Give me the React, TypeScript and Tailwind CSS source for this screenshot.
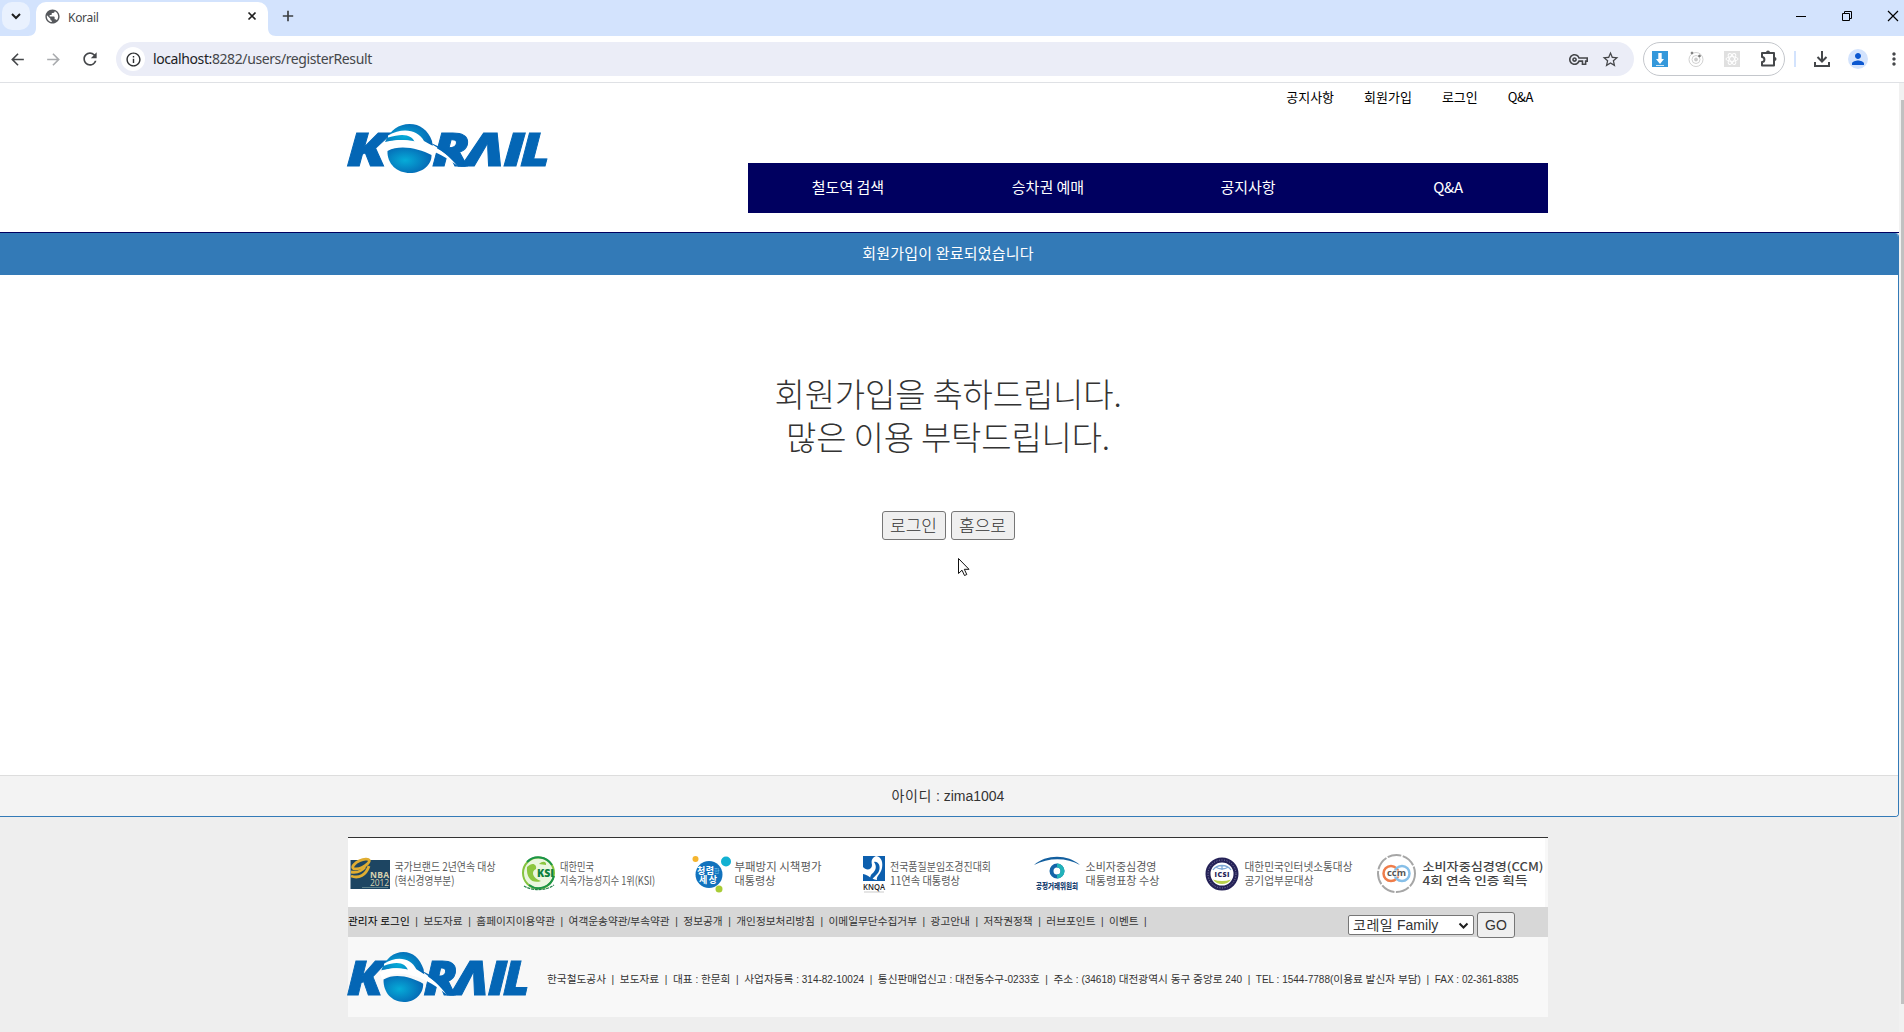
import React from "react";
import {
  MdArrowBack,
  MdArrowForward,
  MdInfoOutline,
  MdMoreVert,
  MdOutlineExtension,
  MdOutlineFileDownload,
  MdOutlineVpnKey,
  MdPerson,
  MdPublic,
  MdRefresh,
  MdStarBorder,
} from "react-icons/md";

const hangul = /([\uAC00-\uD7A3]+)/;

/** Text whose Hangul runs take a class of their own. */
function Mixed({ text, ko }: { text: string; ko: string }) {
  return (
    <>
      {text.split(hangul).map((part, i) =>
        hangul.test(part) ? (
          <span key={i} className={ko}>
            {part}
          </span>
        ) : (
          part
        ),
      )}
    </>
  );
}

function KorailLogo({ className, id }: { className: string; id: string }) {
  const letter = {
    fontFamily: '"Open Sans"',
    fontWeight: 800,
    fontStyle: "italic",
    fontSize: 46.5,
    fill: "#0466b5",
    stroke: "#0466b5",
    strokeWidth: 0.8,
    lengthAdjust: "spacingAndGlyphs",
  } as const;
  return (
    <svg className={className} viewBox="0 0 200 49" preserveAspectRatio="none" overflow="visible">
      <defs>
        <radialGradient id={id} cx="0.4" cy="0.5" r="0.6">
          <stop offset="0" stopColor="#06acd8" />
          <stop offset="1" stopColor="#0567b4" />
        </radialGradient>
      </defs>
      <text x="-1.500" y="42.400" textLength="41" {...letter}>K</text>
      <text x="84" y="42.400" textLength="38" {...letter}>R</text>
      <text x="117" y="42.400" textLength="39" {...letter}>Λ</text>
      <text x="155" y="42.400" textLength="22" {...letter}>I</text>
      <text x="172" y="42.400" textLength="30" {...letter}>L</text>
      <path d="M37 18 C42 6 51 0 61.500 0 C72 0 80 6 84 17 L85 25 C74 18 60 13 37 18Z" fill={`url(#${id})`} />
      <path d="M39.500 27 C53 20 71 25 83.500 31 C84 41 74 49 62 49 C49 49 39 40 39.500 27Z" fill={`url(#${id})`} />
      <path d="M40 11.500 C55 3 70 6 76 17 C86 23 101 29 111 42.700 C100 35 87 26 71 23 C58 20 48 21 38 27 L35 20 C46 15 59 15 67 18.500 C64 11 56 8.500 40 13.500Z" fill="#fff" />
      <path d="M80 18 C96 24 107 31 118 42.700 L110 42.700 C103 34 93 25 80 18Z" fill="#0466b5" />
    </svg>
  );
}

function BrowserChrome() {
  return (
    <header className="h-[83px] shrink-0 border-b border-[#dfe1e5] bg-white font-['Noto_Sans',sans-serif] text-[#45474a]">
      <div className="flex h-9 bg-[#d3e3fd]">
        <div className="mt-0.5 ml-0.5 flex size-7 items-center justify-center rounded-[10px] bg-[#e9f1fe]">
          <svg className="size-3" viewBox="0 0 12 12" fill="none" stroke="#1f1f1f" strokeWidth="2">
            <path d="M2 4l4 4 4-4" />
          </svg>
        </div>
        <svg className="mt-auto ml-[-2px] size-2" viewBox="0 0 8 8">
          <path d="M8 0v8H0c5 0 8-3 8-8z" fill="#fff" />
        </svg>
        <div className="mt-0.5 flex w-[232px] items-center rounded-t-[10px] bg-white pr-[9px] pb-1.5 pl-2">
          <MdPublic className="size-[17px] text-[#55585c]" />
          <span className="ml-[7px] flex-1 pt-1 text-xs leading-4 tracking-[-0.3px]">Korail</span>
          <svg className="size-3.5" viewBox="0 0 14 14" stroke="#1f1f1f" strokeWidth="1.700">
            <path d="M3.500 3.500l7 7M10.500 3.500l-7 7" />
          </svg>
        </div>
        <svg className="mt-auto size-2" viewBox="0 0 8 8">
          <path d="M0 0v8h8c-5 0-8-3-8-8z" fill="#fff" />
        </svg>
        <svg className="mt-2.5 ml-1.5 size-3" viewBox="0 0 12 12" stroke="#3c4043" strokeWidth="1.700">
          <path d="M6 .800v10.400M.800 6h10.400" />
        </svg>
        <svg className="mt-2.5 ml-auto size-3" viewBox="0 0 12 12" stroke="#000">
          <path d="M1 6.500h10" />
        </svg>
        <svg className="mt-2.5 ml-[34px] size-3" viewBox="0 0 12 12" fill="none" stroke="#000">
          <path d="M1.500 3.500h7v7h-7zM3.500 3.500v-2h7v7h-2" />
        </svg>
        <svg className="mt-2.5 mr-[5px] ml-[34px] size-3" viewBox="0 0 12 12" stroke="#000" strokeWidth="1.200">
          <path d="M1 1l10 10M11 1L1 11" />
        </svg>
      </div>
      <div className="flex h-[46px] items-center">
        <MdArrowBack className="ml-2 size-[19px]" />
        <MdArrowForward className="ml-[17px] size-[19px] text-[#a9abae]" />
        <MdRefresh className="ml-[17px] size-5" />
        <div className="ml-4 flex h-[34px] w-[1518px] items-center rounded-full bg-[#ebedf7] pl-[5px]">
          <span className="flex size-6 items-center justify-center rounded-full bg-white">
            <MdInfoOutline className="size-[17px] text-[#2d2f31]" />
          </span>
          <span className="ml-2 flex-1 text-sm leading-5 tracking-[-0.4px]">
            <span className="text-[#202124]">localhost:</span>8282/users/registerResult
          </span>
          <MdOutlineVpnKey className="size-[19px]" />
          <MdStarBorder className="mr-3.5 ml-[13px] size-[19px]" />
        </div>
        <div className="ml-[9px] flex h-[34px] w-[142px] items-center rounded-full border border-[#c4c7cc] pl-2">
          <svg className="size-4" viewBox="0 0 16 16">
            <path fill="#3498db" d="M0 0h16v16H0z" />
            <path fill="#fff" d="M6.300 2h3.400v6H12l-4 5-4-5h2.300zM4 14h8v.800H4z" />
          </svg>
          <svg className="ml-5 size-4" viewBox="0 0 16 16" fill="none" stroke="#c4c4c4" strokeWidth=".8">
            <circle cx="8" cy="8.500" r="7" />
            <circle cx="8" cy="8.500" r="4" />
            <circle cx="8" cy="8.500" r="1.500" fill="#ccc" />
            <circle cx="4" cy="2" r="1" fill="#777" stroke="#777" />
            <circle cx="11.500" cy="5" r="1" fill="#777" stroke="#777" />
          </svg>
          <svg className="ml-5 size-4" viewBox="0 0 16 16" fill="none" stroke="#fff">
            <path fill="#e0e0e0" stroke="none" d="M0 0h16v16H0z" />
            <ellipse cx="8" cy="8" rx="6" ry="2.400" />
            <ellipse cx="8" cy="8" rx="6" ry="2.400" transform="rotate(60 8 8)" />
            <ellipse cx="8" cy="8" rx="6" ry="2.400" transform="rotate(120 8 8)" />
          </svg>
          <svg className="ml-5 size-[18px]" viewBox="0 0 18 18" fill="none" stroke="#45474a" strokeWidth="2">
            <path d="M2 3h12v12.500H2v-3.500c3.200 0 3.200-5 0-5z" strokeLinejoin="round" />
            <path d="M6 2.500a2 2 0 0 1 4 0zM14.500 7a2 2 0 0 1 0 4z" fill="#45474a" stroke="none" />
          </svg>
        </div>
        <div className="ml-[9px] h-4 w-0.5 bg-[#d3e3fd]" />
        <svg className="ml-[17px] size-[18px]" viewBox="0 0 18 18" fill="none" stroke="#45474a" strokeWidth="2">
          <path d="M9 1v10M4.500 7L9 11.500 13.500 7M2 12v4h14v-4" />
        </svg>
        <span className="ml-[17px] flex size-5 items-center justify-center rounded-full bg-[#d3e3fd]">
          <MdPerson className="size-[18px] text-[#0b57d0]" />
        </span>
        <MdMoreVert className="ml-4 size-5 shrink-0" />
      </div>
    </header>
  );
}

function SiteHeader() {
  return (
    <div className="h-[150px] shrink-0 border-b border-[#000060] bg-white pr-[3px]">
      <div className="mx-auto flex w-[1200px] justify-between">
        <KorailLogo id="headerGlobe" className="mt-[41px] h-[49px] w-[200px]" />
        <div className="w-[800px]">
          <ul className="flex h-20 justify-end gap-[30px] pt-1 pr-[15px] text-[13px] leading-5 text-black">
            <li>공지사항</li>
            <li>회원가입</li>
            <li>로그인</li>
            <li className="tracking-[-0.4px]">Q&amp;A</li>
          </ul>
          <nav className="grid h-[50px] grid-cols-4 items-center bg-[#000060] pb-0.5 text-center text-[15px] text-white">
            <a>철도역 검색</a>
            <a>승차권 예매</a>
            <a>공지사항</a>
            <a className="tracking-[-0.4px]">Q&amp;A</a>
          </nav>
        </div>
      </div>
    </div>
  );
}

function ResultPanel() {
  return (
    <section className="flex h-[584px] shrink-0 flex-col overflow-hidden rounded-r-[4px] border-r border-b border-[#337ab7] bg-white text-center text-[#333]">
      <h3 className="h-[42px] bg-[#337ab7] pr-0.5 text-[15px] leading-[39px] tracking-[0.2px] text-white">
        회원가입이 완료되었습니다
      </h3>
      <div className="flex-1 pt-[97px] pr-0.5">
        <p className="text-[33px] leading-[43px] font-light tracking-[-0.2px]">
          회원가입을 축하드립니다.
          <br />
          많은 이용 부탁드립니다.
        </p>
        <div className="mt-[53px] flex justify-center gap-[5px] text-[17px] font-light">
          <button className="h-[29px] w-16 rounded-[3px] border border-[#767676] bg-[#efefef] pb-0.5 leading-[23px]">로그인</button>
          <button className="h-[29px] w-16 rounded-[3px] border border-[#767676] bg-[#efefef] pb-0.5 leading-[23px]">홈으로</button>
        </div>
      </div>
      <div className="h-[41px] border-t border-[#ddd] bg-[#f3f3f3] pr-0.5 font-['Liberation_Sans','Noto_Sans_CJK_KR',sans-serif] text-sm leading-[41px]">
        <Mixed text="아이디 : zima1004" ko="tracking-[0.6px]" />
      </div>
    </section>
  );
}

type BadgeProps = {
  x: number;
  lines: [string, string];
  widths: [number, number];
  bold?: boolean;
  children: React.ReactNode;
};

function Badge({ x, lines, widths, bold, children }: BadgeProps) {
  return (
    <svg className="h-[69px] w-[171px]" viewBox="0 0 171 69" fontFamily='"Noto Sans CJK KR"'>
      {children}
      {lines.map((line, i) => (
        <text
          key={line}
          x={x}
          y={33 + i * 13.5}
          fontSize="11.500"
          fontWeight={bold ? 500 : 400}
          fill={bold ? "#444" : "#5a5a5a"}
          textLength={widths[i]}
          lengthAdjust="spacingAndGlyphs"
        >
          {line}
        </text>
      ))}
    </svg>
  );
}

function Badges() {
  return (
    <div className="grid h-[69px] w-[1197px] grid-cols-7 bg-white">
      <Badge x={46.500} lines={["국가브랜드 2년연속 대상", "(혁신경영부분)"]} widths={[101, 60]}>
        <path fill="#1d4562" d="M2.500 22h39.500v29H2.500z" />
        <g fill="none" stroke="#e0ad32" strokeWidth="2.800">
          <ellipse cx="13" cy="26" rx="9" ry="3.500" transform="rotate(-25 13 26)" />
          <path d="M3 38c8 3 15-1 18-10M3 34c7 1 11-1 14-5" />
        </g>
        <text x="22" y="39.500" fontSize="8.500" fontWeight="700" fontFamily="Open Sans" fill="#d8d2b0" textLength="19">NBA</text>
        <text x="22" y="47.500" fontSize="8.500" fontFamily="Open Sans" fill="#d8d2b0" textLength="19">2012</text>
        <path stroke="#8aa" strokeWidth=".6" d="M14 49.500h26" />
      </Badge>
      <Badge x={41} lines={["대한민국", "지속가능성지수 1위(KSI)"]} widths={[34, 95]}>
        <circle cx="19.500" cy="35" r="15.500" fill="#eaf6df" stroke="#86c440" strokeWidth="2" />
        <path d="M8 24a16 16 0 0 1 25 3M35 38a16 16 0 0 1-25 9" fill="none" stroke="#1b9448" strokeWidth="2" />
        <path d="M8 29c6-6 10-2 9 2-5 2-4 9 5 12-8 3-15-2-14-14zM20 26c4-4 8-2 7 1z" fill="#8cc63f" />
        <text x="18" y="38.500" fontSize="10" fontWeight="800" fontFamily="Open Sans" fill="#0c8040" textLength="17" lengthAdjust="spacingAndGlyphs">KSI</text>
        <path d="M5 48c8 5 22 5 30-1" fill="none" stroke="#238048" strokeDasharray="3 .8" strokeWidth="1.200" />
      </Badge>
      <Badge x={44.500} lines={["부패방지 시책평가", "대통령상"]} widths={[87, 41]}>
        <circle cx="19" cy="36.500" r="13.500" fill="#1272bd" />
        <circle cx="5.500" cy="21" r="3" fill="#f5b52e" />
        <circle cx="36" cy="23.500" r="5" fill="#12b1d2" />
        <circle cx="29" cy="51" r="3.500" fill="#a9cc36" />
        <text x="7" y="35.500" fontSize="9" fontWeight="700" fill="#fff" textLength="17">청렴</text>
        <text x="24" y="34.500" fontSize="6" fill="#7cc8ec">한</text>
        <text x="9" y="45" fontSize="9" fontWeight="700" fill="#fff" textLength="18">세상</text>
      </Badge>
      <Badge x={29} lines={["전국품질분임조경진대회", "11연속 대통령상"]} widths={[101, 70]}>
        <path fill="#0d5fae" d="M2 18h22v25H2z" />
        <path d="M2 29c3 4 9 3 9-2-1-5 0-7 4-9 6 1 7 7 6 12-1 6-6 8-5 12-7-1-8-5-14-6z" fill="#fff" />
        <path d="M13 24c4-1 7 4 5 9s-7 6-7 10c-3-2-2-6 1-8 3-3 4-7 1-11z" fill="#0d5fae" />
        <text x="2" y="51.500" fontSize="8.500" fontWeight="600" fontFamily="Open Sans" fill="#222" textLength="22" lengthAdjust="spacingAndGlyphs">KNQA</text>
        <path stroke="#aaa" strokeWidth=".6" d="M3 54h20" />
      </Badge>
      <Badge x={53.500} lines={["소비자중심경영", "대통령표창 수상"]} widths={[71, 74]}>
        <path d="M2 27C14 16 36 16 48 27 35 19.500 17 19 2 27z" fill="#135f9f" />
        <circle cx="25" cy="33" r="5.500" fill="none" stroke="#1565a9" strokeWidth="4" />
        <path d="M25 27.500a5.500 5.500 0 0 1 0 11" fill="none" stroke="#22b3b9" strokeWidth="4" />
        <text x="4" y="50.500" fontSize="8.500" fontWeight="900" fill="#16406f" textLength="42" lengthAdjust="spacingAndGlyphs">공정거래위원회</text>
      </Badge>
      <Badge x={41.500} lines={["대한민국인터넷소통대상", "공기업부문대상"]} widths={[108, 69]}>
        <circle cx="19" cy="36" r="14" fill="#fff" stroke="#252257" strokeWidth="5" />
        <circle cx="19" cy="36" r="14" fill="none" stroke="#8a87ad" strokeDasharray="1 1.600" />
        <path d="M10 32c4-6 14-6 18 0M12.500 29c4 2.500 9 2.500 13 0M19 27v5" fill="none" stroke="#7ea8d6" strokeWidth="1.300" />
        <path d="M10 41.500c4 6 14 6 18 0-6 2-12 2-18 0z" fill="#b9d24b" />
        <text x="11.500" y="38.500" fontSize="7" fontWeight="800" fontFamily="Open Sans" fill="#252257" textLength="15">ICSI</text>
      </Badge>
      <Badge bold x={48.500} lines={["소비자중심경영(CCM)", "4회 연속 인증 획득"]} widths={[121, 105]}>
        <circle cx="22.500" cy="35.500" r="18.500" fill="none" stroke="#a6a6a6" strokeWidth="2" strokeDasharray="14 1.500" />
        <circle cx="17" cy="35.500" r="7.500" fill="none" stroke="#ef7d4a" strokeWidth="2.500" />
        <circle cx="28" cy="35.500" r="7.500" fill="none" stroke="#86bfe8" strokeWidth="2.500" />
        <path d="M13 32.500h19v6H13z" fill="#fff" />
        <text x="13" y="38" fontSize="9" fontWeight="700" fontFamily="Open Sans" fill="#555" textLength="19" lengthAdjust="spacingAndGlyphs">ccm</text>
      </Badge>
    </div>
  );
}

const links = [
  "보도자료",
  "홈페이지이용약관",
  "여객운송약관/부속약관",
  "정보공개",
  "개인정보처리방침",
  "이메일무단수집거부",
  "광고안내",
  "저작권정책",
  "러브포인트",
  "이벤트",
];

const company = [
  "한국철도공사",
  "보도자료",
  "대표 : 한문희",
  "사업자등록 : 314-82-10024",
  "통신판매업신고 : 대전동수구-0233호",
  "주소 : (34618) 대전광역시 동구 중앙로 240",
  "TEL : 1544-7788(이용료 발신자 부담)",
  "FAX : 02-361-8385",
];

function SiteFooter() {
  return (
    <footer className="mx-auto mt-5 h-[180px] w-[1200px] shrink-0 border-t border-[#333] bg-[#f8f8f8] font-['Liberation_Sans','Noto_Sans_CJK_KR',sans-serif] text-[#333]">
      <Badges />
      <div className="flex h-[30px] justify-between bg-[#d7d7d7]">
        <ul className="flex items-baseline text-[10px] leading-[29px]">
          <li className="text-black">
            <Mixed text="관리자 로그인" ko="text-[10.7px]" />
          </li>
          {links.map((label) => (
            <li key={label} className="flex items-baseline">
              <span className="w-[13.6px] text-center">|</span>
              <Mixed text={label} ko="text-[10.7px]" />
            </li>
          ))}
          <li className="w-[13.6px] text-center">|</li>
        </ul>
        <div className="mr-[33px] flex items-start gap-[3px] pt-[5px] text-sm">
          <div className="mt-[3px] flex h-5 w-[126px] items-center justify-between rounded-[2px] border border-[#767676] bg-white px-1 leading-[18px]">
            <span>
              <Mixed text="코레일 Family" ko="tracking-[0.5px]" />
            </span>
            <svg className="size-[11px]" viewBox="0 0 11 11" fill="none" stroke="#1f1f1f" strokeWidth="2">
              <path d="M1.500 3.500l4 4 4-4" />
            </svg>
          </div>
          <button className="h-[26px] w-[38px] rounded-[3px] border border-[#767676] bg-[#efefef]">GO</button>
        </div>
      </div>
      <div className="flex">
        <KorailLogo id="footerGlobe" className="mt-[15px] h-[50px] w-[180px]" />
        <p className="mt-8 ml-[19px] flex h-5 items-baseline text-[10px] leading-5 whitespace-pre">
          {company.map((item, i) => (
            <span key={item} className="flex items-baseline">
              {i > 0 && <span className="w-[13.8px] text-center">|</span>}
              <span>
                <Mixed text={item} ko="text-[10.7px]" />
              </span>
            </span>
          ))}
        </p>
      </div>
    </footer>
  );
}

export default function App() {
  return (
    <div className="flex h-[1032px] w-[1904px] flex-col overflow-hidden bg-[#eee] font-['Noto_Sans_CJK_KR',sans-serif]">
      <BrowserChrome />
      <div className="flex min-h-0 flex-1">
        <main className="flex w-[1899px] flex-col">
          <SiteHeader />
          <ResultPanel />
          <div className="w-[1896px]">
            <SiteFooter />
          </div>
        </main>
        <div className="w-[5px] bg-[#f1f1f1] pt-[17px] pl-0.5">
          <div className="h-[904px] bg-[#c1c1c1]" />
        </div>
      </div>
      <svg className="absolute top-[557px] left-[957px] h-5 w-[14px]" viewBox="0 0 14 20">
        <path d="M1.500 1.500v15l3.500-3.300 2.500 5.300 2.300-1-2.500-5.200h4.700z" fill="#fff" stroke="#111" />
      </svg>
    </div>
  );
}
